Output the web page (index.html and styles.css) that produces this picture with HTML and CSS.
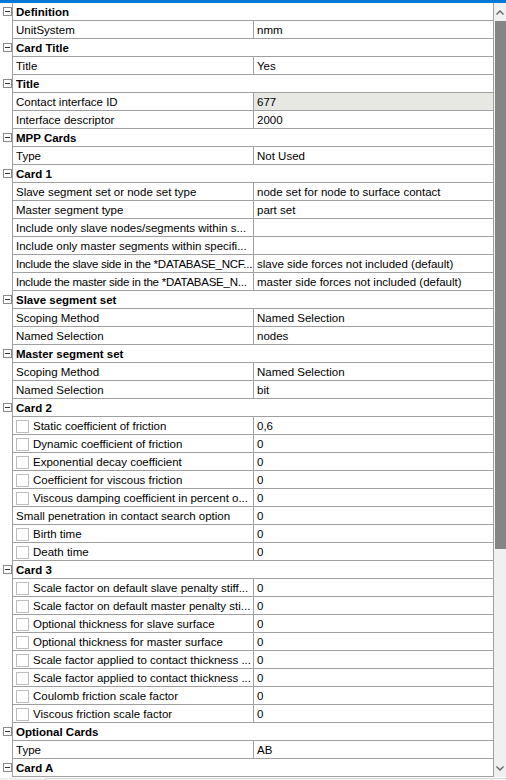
FILE: index.html
```html
<!DOCTYPE html>
<html lang="en">
<head>
  <meta charset="UTF-8">
  <title>Details</title>
  <link rel="stylesheet" href="styles.css">
</head>
<body>
  <div class="topbar"></div>

  <div class="panel">
    <div class="grid">
      <div class="row group"><span class="gutter"><span class="toggle"></span></span><div class="cells"><span class="gname">Definition</span></div></div>
      <div class="row"><span class="gutter"></span><div class="cells"><span class="name">UnitSystem</span><span class="val">nmm</span></div></div>

      <div class="row group"><span class="gutter"><span class="toggle"></span></span><div class="cells"><span class="gname">Card Title</span></div></div>
      <div class="row"><span class="gutter"></span><div class="cells"><span class="name">Title</span><span class="val">Yes</span></div></div>

      <div class="row group"><span class="gutter"><span class="toggle"></span></span><div class="cells"><span class="gname">Title</span></div></div>
      <div class="row"><span class="gutter"></span><div class="cells"><span class="name">Contact interface ID</span><span class="val readonly">677</span></div></div>
      <div class="row"><span class="gutter"></span><div class="cells"><span class="name">Interface descriptor</span><span class="val">2000</span></div></div>

      <div class="row group"><span class="gutter"><span class="toggle"></span></span><div class="cells"><span class="gname">MPP Cards</span></div></div>
      <div class="row"><span class="gutter"></span><div class="cells"><span class="name">Type</span><span class="val">Not Used</span></div></div>

      <div class="row group"><span class="gutter"><span class="toggle"></span></span><div class="cells"><span class="gname">Card 1</span></div></div>
      <div class="row"><span class="gutter"></span><div class="cells"><span class="name">Slave segment set or node set type</span><span class="val">node set for node to surface contact</span></div></div>
      <div class="row"><span class="gutter"></span><div class="cells"><span class="name">Master segment type</span><span class="val">part set</span></div></div>
      <div class="row"><span class="gutter"></span><div class="cells"><span class="name">Include only slave nodes/segments within s...</span><span class="val"></span></div></div>
      <div class="row"><span class="gutter"></span><div class="cells"><span class="name">Include only master segments within specifi...</span><span class="val"></span></div></div>
      <div class="row"><span class="gutter"></span><div class="cells"><span class="name tight">Include the slave side in the *DATABASE_NCF...</span><span class="val">slave side forces not included (default)</span></div></div>
      <div class="row"><span class="gutter"></span><div class="cells"><span class="name tight">Include the master side in the *DATABASE_N...</span><span class="val">master side forces not included (default)</span></div></div>

      <div class="row group"><span class="gutter"><span class="toggle"></span></span><div class="cells"><span class="gname">Slave segment set</span></div></div>
      <div class="row"><span class="gutter"></span><div class="cells"><span class="name">Scoping Method</span><span class="val">Named Selection</span></div></div>
      <div class="row"><span class="gutter"></span><div class="cells"><span class="name">Named Selection</span><span class="val">nodes</span></div></div>

      <div class="row group"><span class="gutter"><span class="toggle"></span></span><div class="cells"><span class="gname">Master segment set</span></div></div>
      <div class="row"><span class="gutter"></span><div class="cells"><span class="name">Scoping Method</span><span class="val">Named Selection</span></div></div>
      <div class="row"><span class="gutter"></span><div class="cells"><span class="name">Named Selection</span><span class="val">bit</span></div></div>

      <div class="row group"><span class="gutter"><span class="toggle"></span></span><div class="cells"><span class="gname">Card 2</span></div></div>
      <div class="row"><span class="gutter"></span><div class="cells"><span class="name"><span class="check"></span>Static coefficient of friction</span><span class="val">0,6</span></div></div>
      <div class="row"><span class="gutter"></span><div class="cells"><span class="name"><span class="check"></span>Dynamic coefficient of friction</span><span class="val">0</span></div></div>
      <div class="row"><span class="gutter"></span><div class="cells"><span class="name"><span class="check"></span>Exponential decay coefficient</span><span class="val">0</span></div></div>
      <div class="row"><span class="gutter"></span><div class="cells"><span class="name"><span class="check"></span>Coefficient for viscous friction</span><span class="val">0</span></div></div>
      <div class="row"><span class="gutter"></span><div class="cells"><span class="name"><span class="check"></span>Viscous damping coefficient in percent o...</span><span class="val">0</span></div></div>
      <div class="row"><span class="gutter"></span><div class="cells"><span class="name">Small penetration in contact search option</span><span class="val">0</span></div></div>
      <div class="row"><span class="gutter"></span><div class="cells"><span class="name"><span class="check"></span>Birth time</span><span class="val">0</span></div></div>
      <div class="row"><span class="gutter"></span><div class="cells"><span class="name"><span class="check"></span>Death time</span><span class="val">0</span></div></div>

      <div class="row group"><span class="gutter"><span class="toggle"></span></span><div class="cells"><span class="gname">Card 3</span></div></div>
      <div class="row"><span class="gutter"></span><div class="cells"><span class="name"><span class="check"></span>Scale factor on default slave penalty stiff...</span><span class="val">0</span></div></div>
      <div class="row"><span class="gutter"></span><div class="cells"><span class="name"><span class="check"></span>Scale factor on default master penalty sti...</span><span class="val">0</span></div></div>
      <div class="row"><span class="gutter"></span><div class="cells"><span class="name"><span class="check"></span>Optional thickness for slave surface</span><span class="val">0</span></div></div>
      <div class="row"><span class="gutter"></span><div class="cells"><span class="name"><span class="check"></span>Optional thickness for master surface</span><span class="val">0</span></div></div>
      <div class="row"><span class="gutter"></span><div class="cells"><span class="name"><span class="check"></span>Scale factor applied to contact thickness ...</span><span class="val">0</span></div></div>
      <div class="row"><span class="gutter"></span><div class="cells"><span class="name"><span class="check"></span>Scale factor applied to contact thickness ...</span><span class="val">0</span></div></div>
      <div class="row"><span class="gutter"></span><div class="cells"><span class="name"><span class="check"></span>Coulomb friction scale factor</span><span class="val">0</span></div></div>
      <div class="row"><span class="gutter"></span><div class="cells"><span class="name"><span class="check"></span>Viscous friction scale factor</span><span class="val">0</span></div></div>

      <div class="row group"><span class="gutter"><span class="toggle"></span></span><div class="cells"><span class="gname">Optional Cards</span></div></div>
      <div class="row"><span class="gutter"></span><div class="cells"><span class="name">Type</span><span class="val">AB</span></div></div>

      <div class="row group"><span class="gutter"><span class="toggle"></span></span><div class="cells"><span class="gname">Card A</span></div></div>
    </div>

    <div class="vscroll">
      <span class="arrow">
        <svg width="8" height="5" viewBox="0 0 8 5"><path d="M0.5 4.5 L4 1 L7.5 4.5" fill="none" stroke="#606060" stroke-width="1.3"/></svg>
      </span>
      <span class="thumb"></span>
      <span class="track"></span>
      <span class="arrow">
        <svg width="8" height="5" viewBox="0 0 8 5"><path d="M0.5 0.5 L4 4 L7.5 0.5" fill="none" stroke="#606060" stroke-width="1.3"/></svg>
      </span>
    </div>
  </div>

  <div class="hscroll"><span class="hthumb"></span></div>
</body>
</html>
```

FILE: styles.css
```css
body {
  margin: 0;
  font-family: "Liberation Sans", Arial, sans-serif;
  font-size: 11.5px;
  color: #000;
  background: #fff;
  overflow: hidden;
}
.topbar {
  height: 3px;
  background: #0078d7;
}
.panel {
  display: flex;
}
.grid {
  width: 494px;
}
.row {
  display: flex;
  height: 18px;
}
.gutter {
  width: 12px;
  flex: none;
}
.toggle {
  position: relative;
  display: block;
  width: 7px;
  height: 7px;
  margin: 4px 0 0 3px;
  border: 1px solid #8a8a8a;
  background: #fff;
}
.toggle::after {
  content: "";
  position: absolute;
  left: 1px;
  top: 3px;
  width: 5px;
  height: 1px;
  background: #333;
}
.cells {
  flex: 1;
  display: grid;
  grid-template-columns: 241px 1fr;
  border-left: 1px solid #a0a0a0;
  border-right: 1px solid #a0a0a0;
  border-bottom: 1px solid #a0a0a0;
}
.name, .val, .gname {
  box-sizing: border-box;
  height: 17px;
  padding: 2px 0 0 3px;
  line-height: 15px;
  white-space: nowrap;
  overflow: hidden;
  text-overflow: clip;
}
.name {
  border-right: 1px solid #a0a0a0;
}
.tight {
  letter-spacing: -0.25px;
}
.gname {
  grid-column: 1 / 3;
  font-weight: bold;
}
.readonly {
  background: #e7e7e4;
}
.check {
  display: inline-block;
  box-sizing: border-box;
  width: 13px;
  height: 13px;
  margin: 0 4px 0 0;
  vertical-align: -3px;
  border: 1px solid #bdbdbd;
  background: #fff;
}
.vscroll {
  width: 12px;
  height: 774px;
  display: flex;
  flex-direction: column;
  background: #f0f0f0;
}
.arrow {
  height: 18px;
  display: flex;
  align-items: center;
  justify-content: center;
  flex: none;
}
.thumb {
  height: 528px;
  margin-left: 1px;
  background: #858585;
  flex: none;
}
.track {
  flex: 1;
}
.hscroll {
  height: 3px;
  background: #f0f0f0;
  padding-left: 45px;
}
.hthumb {
  display: block;
  height: 2px;
  margin-top: 1px;
  border-top: 1px solid #d6d6d6;
  border-left: 1px solid #d6d6d6;
  background: #fafafa;
}
```
